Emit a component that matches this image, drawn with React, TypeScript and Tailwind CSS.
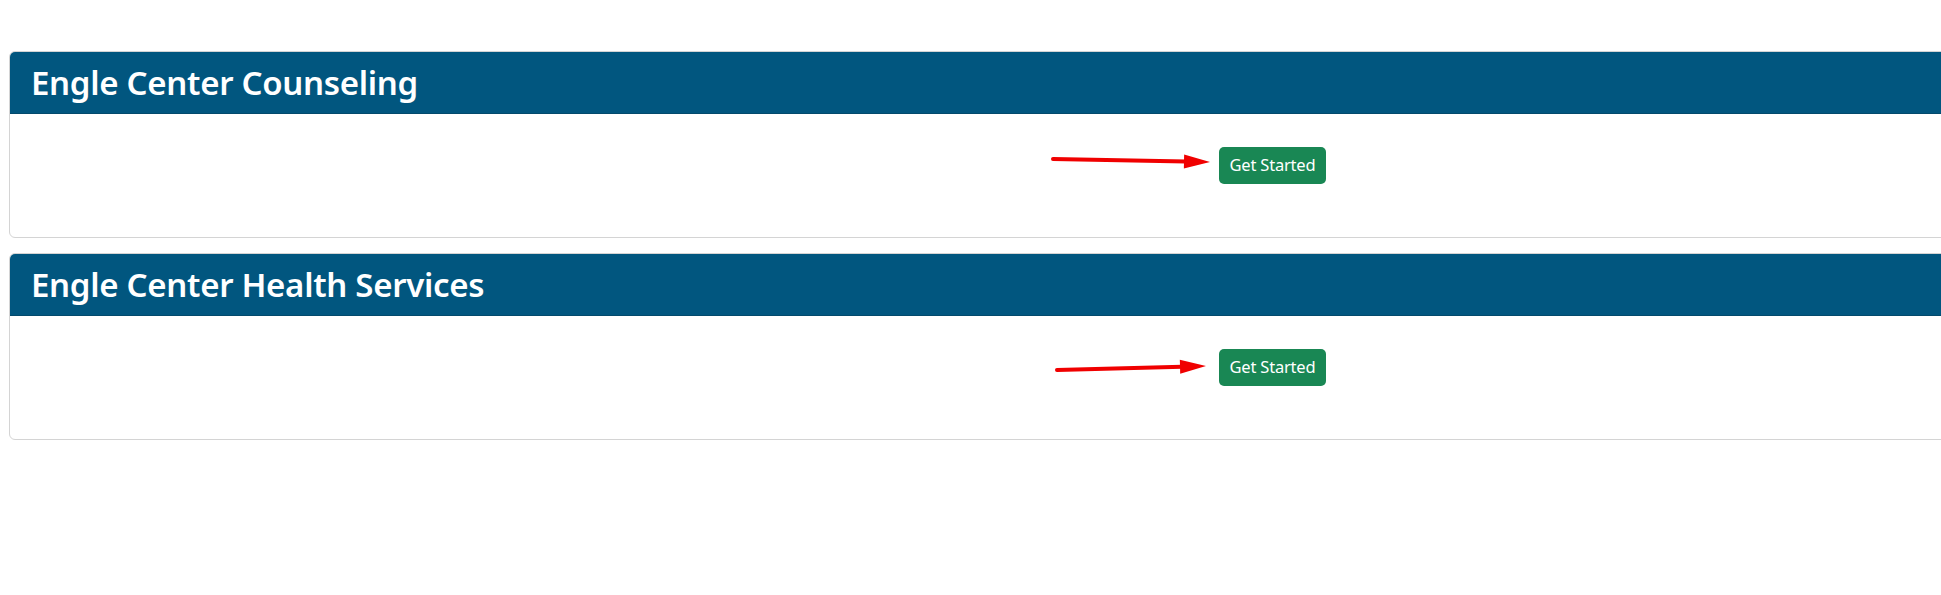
import React from 'react';

type Arrow = { x1: number; y1: number; x2: number; y2: number };

const services: { title: string; arrow: Arrow }[] = [
  { title: 'Engle Center Counseling', arrow: { x1: 1043, y1: 45, x2: 1200, y2: 48 } },
  { title: 'Engle Center Health Services', arrow: { x1: 1047, y1: 54, x2: 1196, y2: 50 } },
];

// red annotation arrow drawn over the card body
const RedArrow = ({ a }: { a: Arrow }) => {
  const len = Math.hypot(a.x2 - a.x1, a.y2 - a.y1);
  const ux = (a.x2 - a.x1) / len;
  const uy = (a.y2 - a.y1) / len;
  const bx = a.x2 - ux * 26;
  const by = a.y2 - uy * 26;
  const head = `${a.x2},${a.y2} ${bx - uy * 7},${by + ux * 7} ${bx + uy * 7},${by - ux * 7}`;
  return (
    <svg className="absolute left-0 top-0 pointer-events-none" width="1400" height="120">
      <line x1={a.x1} y1={a.y1} x2={bx + ux * 2} y2={by + uy * 2} stroke="#f00000" strokeWidth="4" strokeLinecap="round" />
      <polygon points={head} fill="#f00000" />
    </svg>
  );
};

const ServiceCard = ({ title, arrow }: { title: string; arrow: Arrow }) => (
  <div className="w-[2100px] border border-[#d4d4d4] rounded-[6px] overflow-hidden bg-white">
    <div className="h-[62px] bg-[#01567f] border-b border-[#034a6c] flex items-center px-[21px]">
      <h2 className="text-white text-[33px] font-semibold leading-none tracking-[-0.3px]" style={{ fontFamily: '"Noto Sans", "Open Sans", sans-serif' }}>
        {title}
      </h2>
    </div>
    <div className="relative h-[123px] pt-[33px]">
      <RedArrow a={arrow} />
      <button
        className="ml-[1209px] w-[107px] h-[37px] rounded-[5px] bg-[#198754] text-white text-[16.5px] flex items-center justify-center tracking-[-0.2px]"
        style={{ fontFamily: '"Noto Sans", "Open Sans", sans-serif' }}
      >
        Get Started
      </button>
    </div>
  </div>
);

export default function App() {
  return (
    <div className="w-screen h-[595px] overflow-hidden bg-white pt-[51px] pl-[9px]">
      <div className="flex flex-col gap-[15px]">
        {services.map((s) => (
          <ServiceCard key={s.title} title={s.title} arrow={s.arrow} />
        ))}
      </div>
    </div>
  );
}
